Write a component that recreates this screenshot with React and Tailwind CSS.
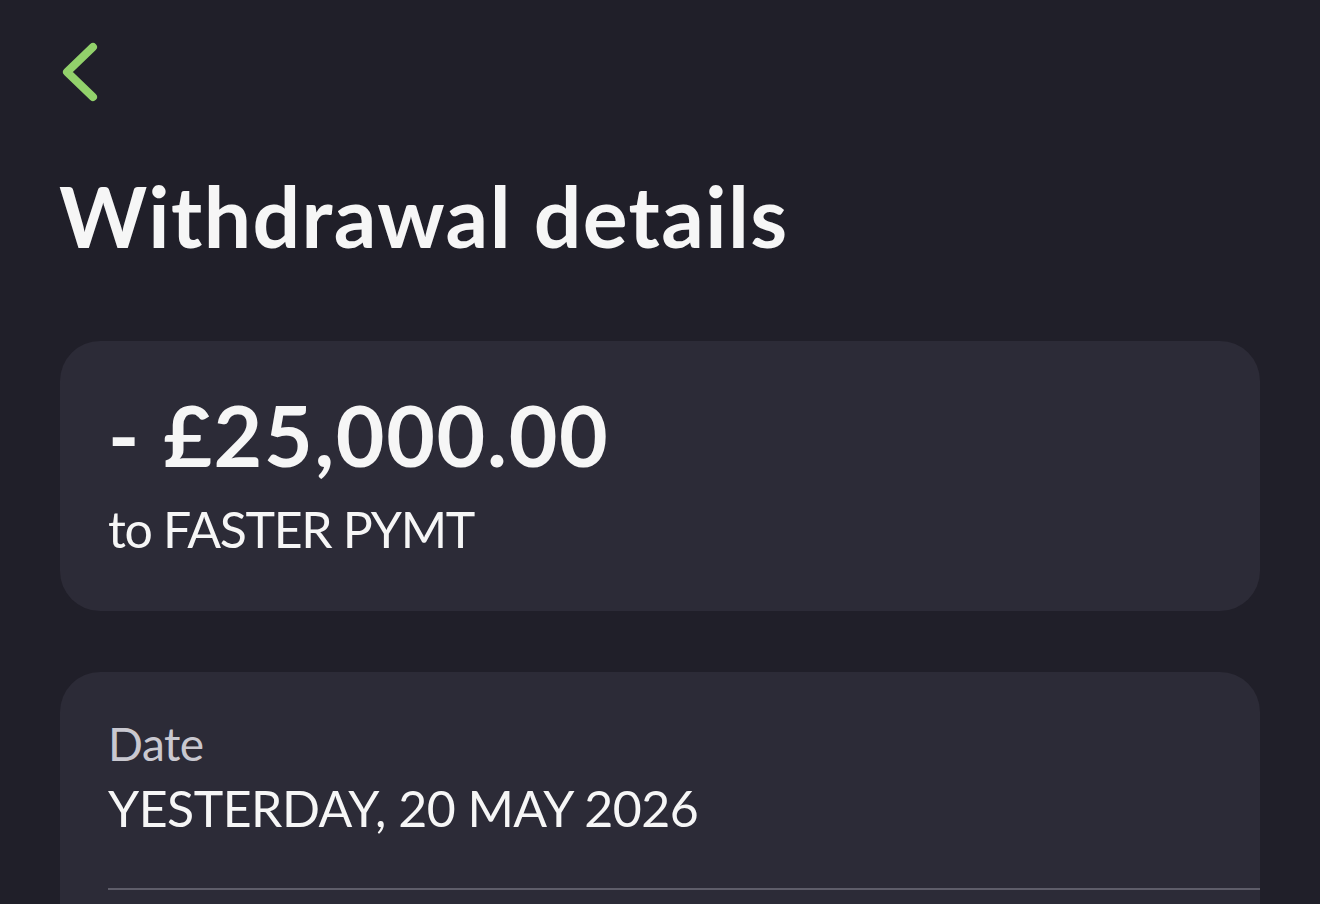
export default function App() {
  const font = { fontFamily: 'Lato, "Noto Sans", sans-serif' };
  return (
    <div className="min-h-screen w-full bg-[#201f29] px-[60px] overflow-hidden" style={font}>
      <div className="h-[42px]" />
      <svg width="40" height="60" viewBox="0 0 40 60" className="ml-[2px] block">
        <polyline points="31,5 5,30 31,55" fill="none" stroke="#92d16b" strokeWidth="8" strokeLinecap="round" strokeLinejoin="round" />
      </svg>
      <h1 className="mt-[72px] text-[84px] leading-[84px] font-bold tracking-[1.4px] text-[#f6f6f6] -ml-[1px]">Withdrawal details</h1>
      <div className="mt-[83px] h-[270px] rounded-[40px] bg-[#2c2b37] px-[48px] pt-[52px]">
        <div className="text-[84px] leading-[84px] font-bold tracking-[1.7px] text-[#f6f6f6]">- £25,000.00</div>
        <div className="mt-[22px] text-[50px] leading-[60px] tracking-[-1.3px] text-[#f6f6f6]">to FASTER PYMT</div>
      </div>
      <div className="mt-[61px] rounded-t-[40px] bg-[#2c2b37] pl-[48px] pt-[44px] pb-[40px]">
        <div className="text-[46px] leading-[56px] tracking-[-0.5px] text-[#c9c8d0]">Date</div>
        <div className="mt-[6px] text-[50px] leading-[60px] tracking-[-0.5px] text-[#f6f6f6]">YESTERDAY, 20 MAY 2026</div>
        <div className="mt-[50px] h-[2px] bg-[#5e5d69]" />
      </div>
    </div>
  );
}
